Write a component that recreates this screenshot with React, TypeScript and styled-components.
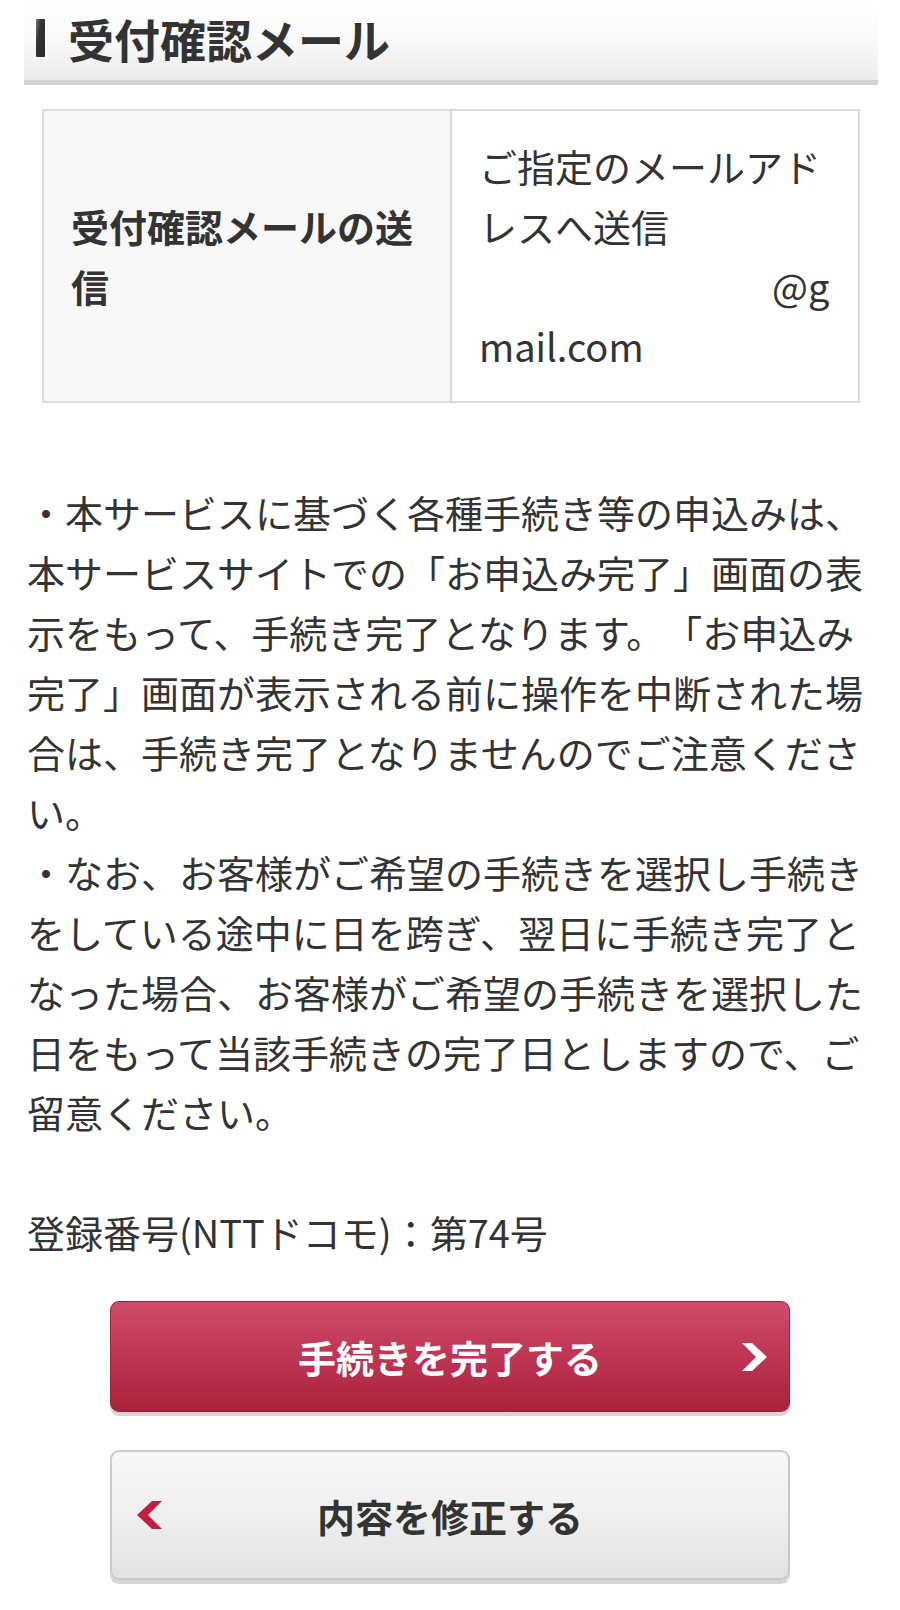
import React from 'react';
import styled, { createGlobalStyle } from 'styled-components';

const GlobalStyle = createGlobalStyle`
  body {
    margin: 0;
    background: #fff;
    color: #333;
    font-family: "Noto Sans CJK JP", "Noto Sans", sans-serif;
    text-spacing-trim: space-all;
  }
`;

const Page = styled.div`
  width: 900px;
  padding-bottom: 30px;
`;

const Heading = styled.h2`
  display: flex;
  align-items: center;
  gap: 23px;
  height: 85px;
  margin: 0 22px 0 24px;
  padding: 0 0 4px 12px;
  box-sizing: border-box;
  background: linear-gradient(#ffffff 0%, #fafafa 45%, #ececec 100%);
  border-bottom: 5px solid #d4d4d4;
  font-size: 46px;
  font-weight: 700;
  line-height: 1;
  color: #333;
`;

const Marker = styled.span`
  display: block;
  width: 9px;
  height: 38px;
  border-radius: 1px;
  background: linear-gradient(100deg, #777 0%, #333 35%, #2a2a2a 100%);
`;

const Table = styled.table`
  width: 818px;
  margin: 24px 0 0 42px;
  border-collapse: collapse;
  table-layout: fixed;
  font-size: 38px;
  line-height: 60px;
`;

const Col = styled.col`
  width: 50%;
`;

const Th = styled.th`
  padding: 25px 27px;
  border: 2px solid #dcdcdc;
  background: #f8f8f8;
  text-align: left;
  vertical-align: middle;
  font-weight: 700;
  color: #333;
`;

const Td = styled.td`
  padding: 25px 27px;
  border: 2px solid #dcdcdc;
  background: #fff;
  vertical-align: middle;
  color: #333;
  word-break: break-all;
`;

const Masked = styled.span`
  display: inline-block;
  width: 293px;
  height: 1px;
`;

const Notes = styled.p`
  margin: 79px 0 0;
  padding: 0 27px;
  font-size: 38px;
  line-height: 60px;
  color: #333;
`;

const Registration = styled(Notes)`
  margin-top: 60px;
`;

const Buttons = styled.div`
  display: flex;
  flex-direction: column;
  align-items: center;
  gap: 38px;
  margin-top: 39px;
`;

const Button = styled.button<{ $primary?: boolean; $height: number }>`
  position: relative;
  display: flex;
  align-items: center;
  justify-content: center;
  width: 680px;
  height: ${(p) => p.$height}px;
  border-radius: 9px;
  font-family: inherit;
  font-size: 38px;
  font-weight: 700;
  cursor: pointer;
  color: ${(p) => (p.$primary ? '#fff' : '#333')};
  border: ${(p) => (p.$primary ? '1px solid #a21f3a' : '2px solid #c9c9c9')};
  background: ${(p) =>
    p.$primary
      ? 'linear-gradient(#cf4d6b 0%, #bf3554 50%, #a9213b 100%)'
      : 'linear-gradient(#f8f8f8 0%, #efefef 50%, #e2e2e2 100%)'};
  box-shadow: 0 4px 0 #d6d6d6;
`;

const Chevron = styled.svg<{ $side: 'left' | 'right' }>`
  position: absolute;
  top: 50%;
  width: 25px;
  height: 28px;
  margin-top: -14px;
  ${(p) => (p.$side === 'right' ? 'right: 22px;' : 'left: 25px;')}
`;

function ArrowRight() {
  return (
    <Chevron $side="right" viewBox="0 0 25 28">
      <polygon points="0,0 10,0 25,14 10,28 0,28 14,14" fill="#fff" />
    </Chevron>
  );
}

function ArrowLeft() {
  return (
    <Chevron $side="left" viewBox="0 0 25 28">
      <polygon points="25,0 15,0 0,14 15,28 25,28 11,14" fill="#c21f3e" />
    </Chevron>
  );
}

export default function App() {
  return (
    <Page>
      <GlobalStyle />
      <Heading>
        <Marker />
        受付確認メール
      </Heading>

      <Table>
        <colgroup>
          <Col />
          <Col />
        </colgroup>
        <tbody>
          <tr>
            <Th>受付確認メールの送信</Th>
            <Td>
              ご指定のメールアドレスへ送信
              <br />
              <Masked aria-hidden="true" />
              @gmail.com
            </Td>
          </tr>
        </tbody>
      </Table>

      <Notes>
        ・本サービスに基づく各種手続き等の申込みは、本サービスサイトでの「お申込み完了」画面の表示をもって、手続き完了となります。「お申込み完了」画面が表示される前に操作を中断された場合は、手続き完了となりませんのでご注意ください。
        <br />
        ・なお、お客様がご希望の手続きを選択し手続きをしている途中に日を跨ぎ、翌日に手続き完了となった場合、お客様がご希望の手続きを選択した日をもって当該手続きの完了日としますので、ご留意ください。
      </Notes>

      <Registration>登録番号(NTTドコモ)：第74号</Registration>

      <Buttons>
        <Button $primary $height={111}>
          手続きを完了する
          <ArrowRight />
        </Button>
        <Button $height={130}>
          <ArrowLeft />
          内容を修正する
        </Button>
      </Buttons>
    </Page>
  );
}
